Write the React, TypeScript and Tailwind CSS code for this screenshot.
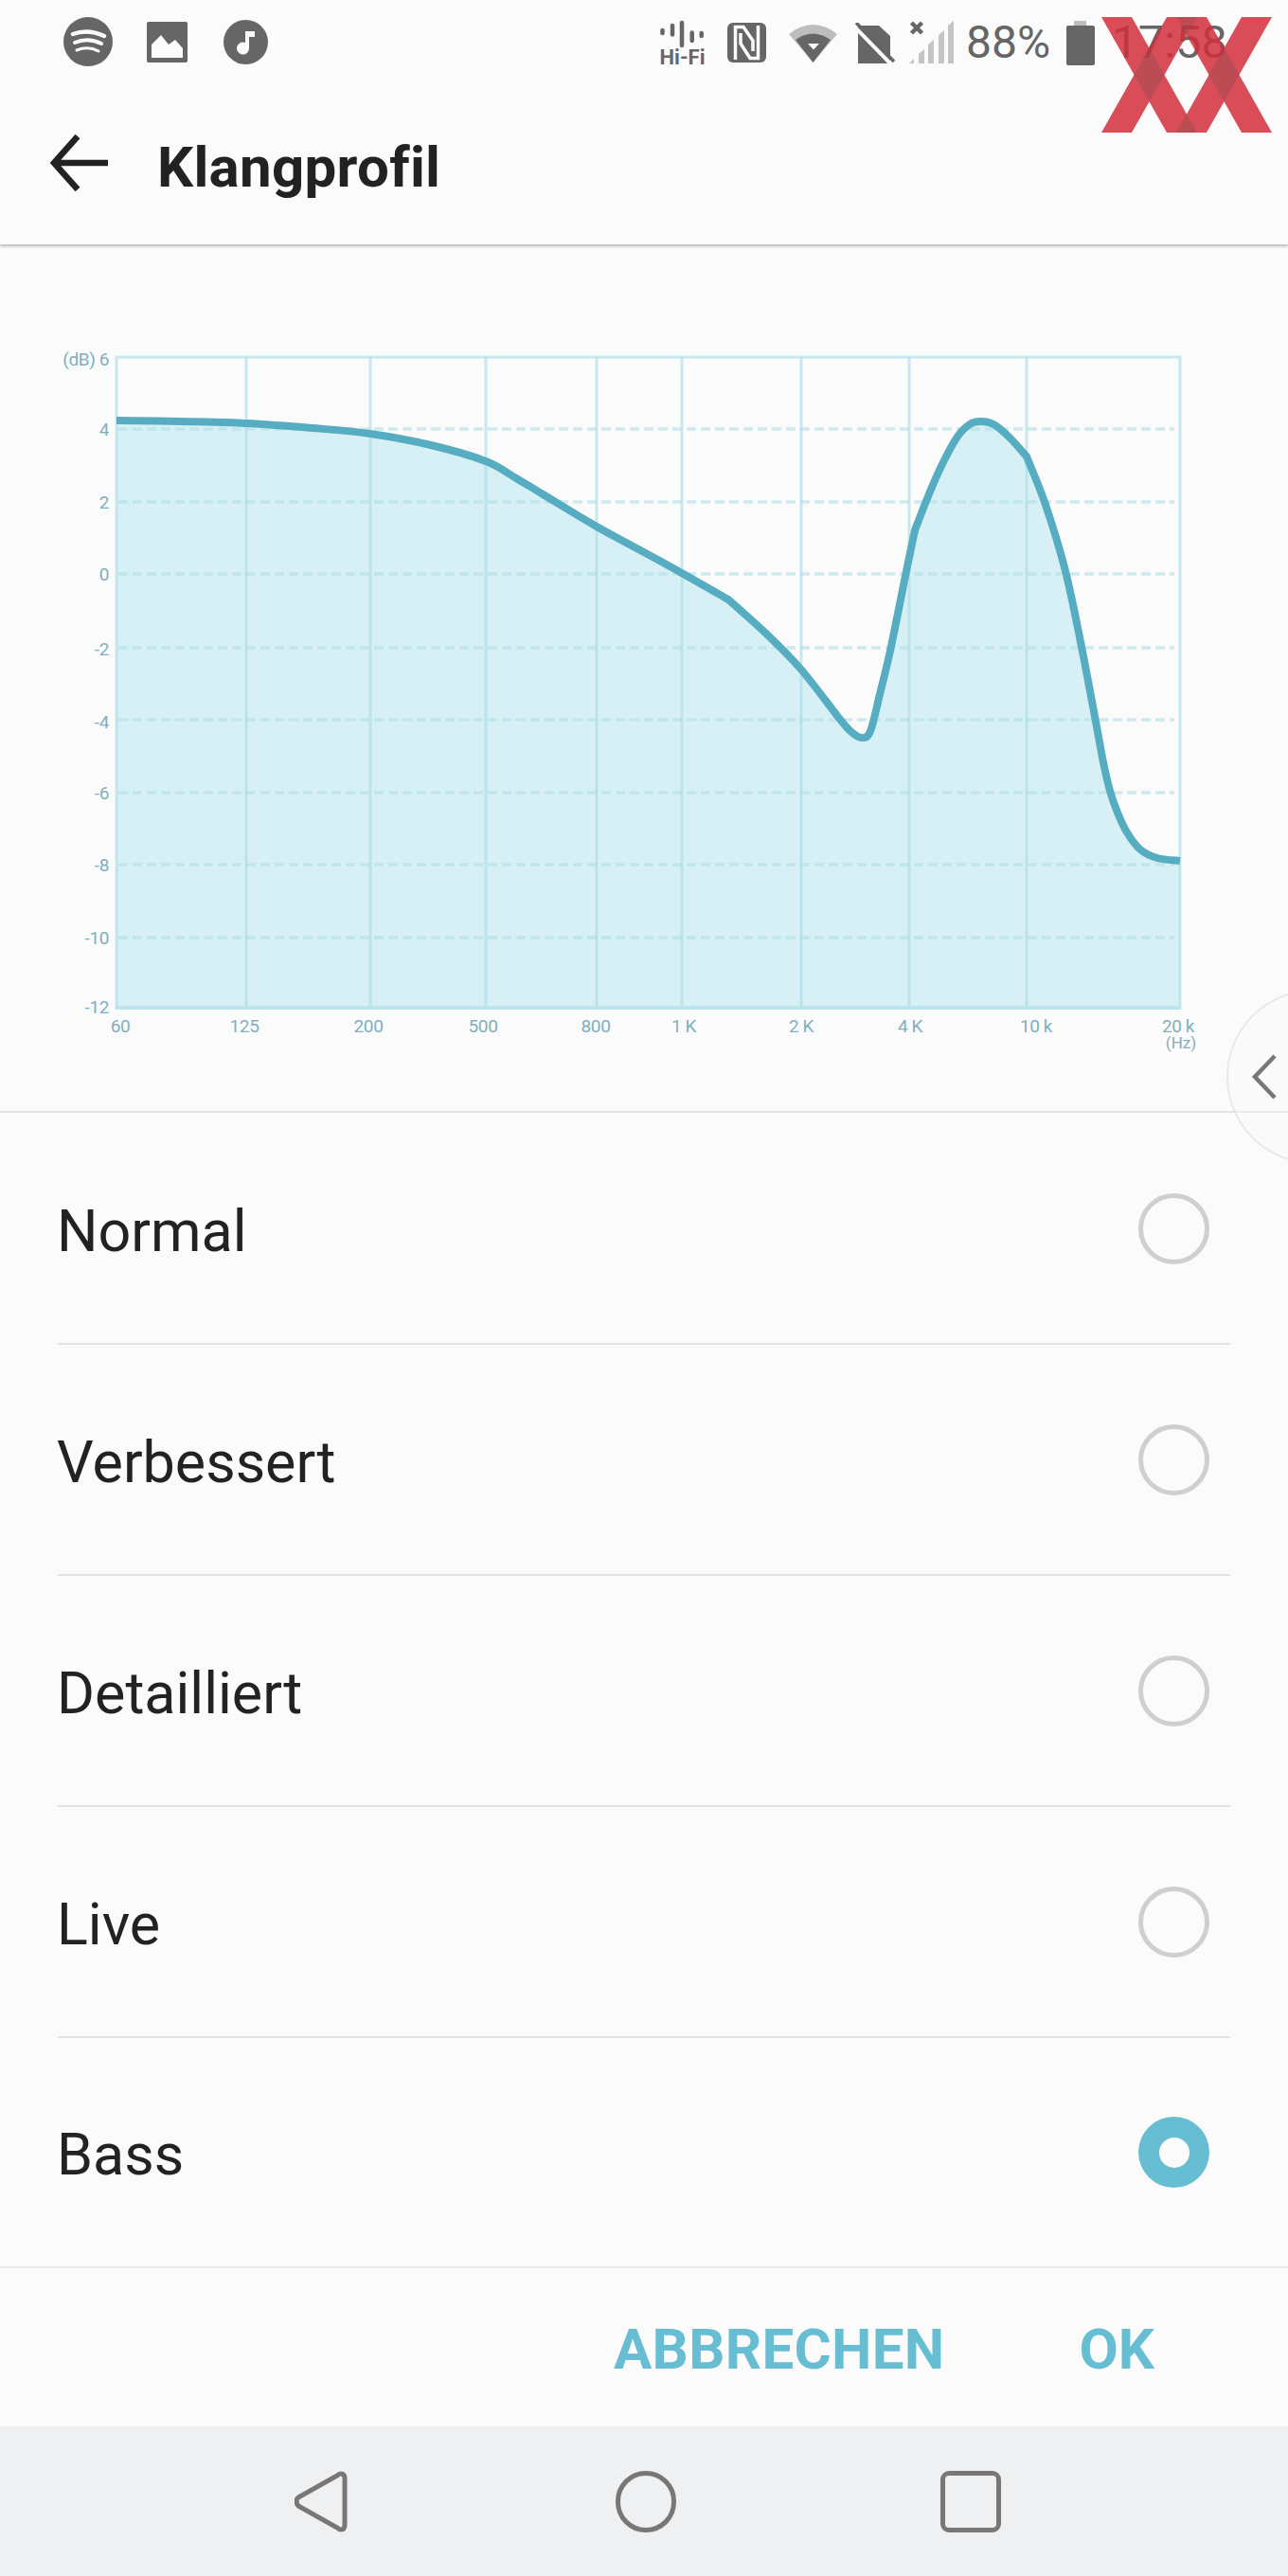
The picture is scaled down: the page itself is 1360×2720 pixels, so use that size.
// split at the kinks so each piece stays smooth on its own
const curveParts: [number, number][][] = [
  [[123, 444], [190, 445], [260, 447], [330, 452], [391, 458], [455, 470], [513, 487], [545, 505], [575, 523], [630, 556], [700, 594], [769, 633]],
  [[769, 633], [810, 670], [846, 707], [885, 757], [898, 772], [910, 779], [919, 772], [929, 733], [940, 687], [957, 603], [966, 560]],
  [[966, 560], [980, 524], [995, 490], [1011, 461], [1024, 448], [1035, 445], [1049, 448], [1066, 462], [1084, 482]],
  [[1084, 482], [1104, 533], [1125, 603], [1142, 683], [1157, 762], [1165, 805], [1172, 835], [1180, 858], [1190, 879], [1204, 897], [1222, 906], [1246, 909]],
];

// catmull-rom through the points
function smooth(pts: [number, number][]) {
  let d = '';
  for (let i = 0; i < pts.length - 1; i++) {
    const p0 = pts[Math.max(i - 1, 0)];
    const p1 = pts[i];
    const p2 = pts[i + 1];
    const p3 = pts[Math.min(i + 2, pts.length - 1)];
    const c1x = p1[0] + (p2[0] - p0[0]) / 6;
    const c1y = p1[1] + (p2[1] - p0[1]) / 6;
    const c2x = p2[0] - (p3[0] - p1[0]) / 6;
    const c2y = p2[1] - (p3[1] - p1[1]) / 6;
    d += ` C${c1x.toFixed(1)} ${c1y.toFixed(1)} ${c2x.toFixed(1)} ${c2y.toFixed(1)} ${p2[0]} ${p2[1]}`;
  }
  return d;
}

const curvePath = `M123 444${curveParts.map(smooth).join('')}`;
const verticals = [260, 391, 513, 630, 720, 846, 960, 1084];
const dashes = [453, 530, 606, 684, 760, 837, 913, 990];
const yLabels: [string, number][] = [
  ['(dB) 6', 379], ['4', 453], ['2', 530], ['0', 606], ['-2', 685], ['-4', 762], ['-6', 837], ['-8', 913], ['-10', 990], ['-12', 1063],
];
const xLabels: [string, number][] = [
  ['60', 127], ['125', 258], ['200', 389], ['500', 510], ['800', 629], ['1 K', 722], ['2 K', 846], ['4 K', 961], ['10 k', 1094], ['20 k', 1244],
];
const options = ['Normal', 'Verbessert', 'Detailliert', 'Live', 'Bass'];

function Chart() {
  return (
    <svg width="1360" height="916" viewBox="0 258 1360 916" className="block font-['Roboto',sans-serif]">
      <path d={`${curvePath} L1246 1064 L123 1064 Z`} fill="#d7f0f5" />
      {dashes.map(y => (
        <line key={y} x1="125" x2="1240" y1={y} y2={y} stroke="#b4e0e8" strokeOpacity="0.65" strokeWidth="3.5" strokeDasharray="10 5" />
      ))}
      {verticals.map(x => (
        <line key={x} x1={x} x2={x} y1="377" y2="1064" stroke="#a8dbe7" strokeOpacity="0.6" strokeWidth="3" />
      ))}
      <rect x="123" y="377" width="1123" height="687" fill="none" stroke="#a8dbe7" strokeOpacity="0.6" strokeWidth="3" />
      <line x1="122" x2="1247" y1="1064" y2="1064" stroke="#bde3ec" strokeWidth="4" />
      <path d={curvePath} fill="none" stroke="#56adc2" strokeWidth="8" strokeLinejoin="round" />
      {yLabels.map(([label, y]) => (
        <text key={label} x="115" y={y + 7} textAnchor="end" className="fill-[#7fb0bd] text-[19px] tracking-[-0.4px]">{label}</text>
      ))}
      {xLabels.map(([label, x]) => (
        <text key={label} x={x} y="1090" textAnchor="middle" className="fill-[#7fb0bd] text-[19px] tracking-[-0.4px]">{label}</text>
      ))}
      <text x="1247" y="1107" textAnchor="middle" className="fill-[#7fb0bd] text-[17px]">(Hz)</text>
    </svg>
  );
}

function StatusLeft() {
  return (
    <div className="flex items-center">
      <svg width="52" height="52" viewBox="0 0 52 52" className="ml-[67px]">
        <circle cx="26" cy="26" r="26" fill="#666" />
        <g fill="none" stroke="#fbfbfb" strokeLinecap="round">
          <path d="M10 18 Q26 12 43 20" strokeWidth="4.5" />
          <path d="M12 27 Q26 21 40 28" strokeWidth="4" />
          <path d="M14 35 Q26 30 37 36" strokeWidth="3" />
        </g>
      </svg>
      <svg width="43" height="43" viewBox="0 0 43 43" className="ml-[36px]">
        <rect width="43" height="43" rx="2" fill="#666" />
        <path d="M5 38 V24 L15 14 L23 24 L30 19 L38 28 V38 Z" fill="#fbfbfb" />
      </svg>
      <svg width="47" height="47" viewBox="0 0 47 47" className="ml-[38px]">
        <circle cx="23.5" cy="23.5" r="23.5" fill="#666" />
        <path d="M23 12 H33 V18 H27 V30 A6.5 6.5 0 1 1 23 24 Z" fill="#fbfbfb" />
      </svg>
    </div>
  );
}

function StatusRight() {
  return (
    <div className="flex items-center absolute left-[696px] top-[21px] h-[48px]">
      <div className="w-[49px] h-[48px] flex flex-col items-center">
        <svg width="49" height="31" viewBox="0 0 49 31" className="shrink-0">
          <g stroke="#666" strokeLinecap="round" strokeWidth="4.5">
            <path d="M3.5 11 V14" />
            <path d="M14 6 V15.5" />
            <path d="M24 3 V27" />
            <path d="M34.7 13.5 V22" />
            <path d="M44.7 14 V17" />
          </g>
        </svg>
        <span className="font-['Roboto',sans-serif] font-bold text-[22px] leading-[18px] text-[#666]">Hi-Fi</span>
      </div>
      <svg width="41" height="42" viewBox="0 0 41 42" className="ml-[23px]">
        <rect width="41" height="42" rx="6" fill="#666" />
        <g fill="none" stroke="#fbfbfb" strokeWidth="3.5">
          <path d="M8.5 39 V4.5 H17 L27 19 V30" />
          <path d="M32.5 3 V37.5 H24 L14 22 V11" />
        </g>
      </svg>
      <svg width="51" height="41" viewBox="0 0 51 41" className="ml-[24px]">
        <path d="M0 11 Q25.5 -9 51 11 L25.5 41 Z" fill="#bdbdbd" />
        <path d="M7 17 Q25.5 4 44 17 L25.5 41 Z" fill="#666" />
        <path d="M20 21 H32 L26 27.5 Z" fill="#fbfbfb" />
      </svg>
      <svg width="43" height="43" viewBox="0 0 43 43" className="ml-[18px]">
        <path d="M4 3 H26 L38 14 V43 H4 Z" fill="#666" />
        <path d="M0 4 L38 43" stroke="#fbfbfb" strokeWidth="4" />
        <path d="M2 0 L42 41" stroke="#666" strokeWidth="3.5" />
      </svg>
      <svg width="47" height="48" viewBox="0 0 47 48" className="ml-[15px]">
        <path d="M2.5 3 L13.5 14 M13.5 3 L2.5 14" stroke="#666" strokeWidth="4.5" />
        <path d="M0 46 L5 41 V46 Z M10 46 V36 L16 31 V46 Z M20 46 V26 L26 21 V46 Z M31 46 V16 L37 11 V46 Z M41 46 V6 L47 1 V46 Z" fill="#c4c4c4" />
      </svg>
      <span className="ml-[13px] font-['Roboto',sans-serif] text-[48px] leading-[48px] text-[#666]">88%</span>
      <svg width="30" height="47" viewBox="0 0 30 47" className="ml-[17px]">
        <path d="M8 0 H21 V5 H8 Z" fill="#bdbdbd" />
        <path d="M2 5 H28 Q30 5 30 7 V45 Q30 47 28 47 H2 Q0 47 0 45 V7 Q0 5 2 5 Z" fill="#666" />
      </svg>
      <span className="ml-[18px] font-['Roboto',sans-serif] text-[49px] leading-[48px] text-[#666]">17:58</span>
    </div>
  );
}

function Watermark() {
  return (
    <svg width="180" height="122" viewBox="0 0 180 122" className="absolute left-[1163px] top-[18px]">
      <g fill="#d22f3b" opacity="0.85">
        <path d="M0 122 L69 0 H101 L32 122 Z" />
        <path d="M0 0 H32 L101 122 H69 Z" />
        <path d="M79 122 L148 0 H180 L111 122 Z" />
        <path d="M79 0 H111 L180 122 H148 Z" />
      </g>
      <g fill="#7a4a50" opacity="0.3">
        <path d="M50.5 32.7 L66.5 61 L50.5 89.3 L34.5 61 Z" />
        <path d="M129.5 32.7 L145.5 61 L129.5 89.3 L113.5 61 Z" />
        <path d="M79 0 H101 L90 19.4 Z" />
        <path d="M79 122 H101 L90 102.6 Z" />
      </g>
    </svg>
  );
}

function Radio({ on }: { on: boolean }) {
  if (on) {
    return (
      <div className="w-[75px] h-[75px] rounded-full bg-[#67bed3] flex items-center justify-center mr-[22px]">
        <div className="w-[32px] h-[32px] rounded-full bg-[#fbfbfb]" />
      </div>
    );
  }
  return <div className="w-[75px] h-[75px] rounded-full border-[5px] border-[#cfcfcf] mr-[22px]" />;
}

export default function App() {
  return (
    <div className="relative w-[1360px] h-[2720px] overflow-hidden bg-[#fbfbfb] flex flex-col font-['Roboto',sans-serif]">
      <div className="relative z-10 h-[258px] shrink-0 bg-[#fbfbfb] shadow-[0_2px_3px_rgba(0,0,0,0.28)]">
        <div className="h-[88px] flex items-center">
          <StatusLeft />
        </div>
        <StatusRight />
        <div className="h-[170px] flex items-start">
          <svg width="64" height="62" viewBox="0 0 64 62" className="ml-[52px] mt-[53px]">
            <path d="M62 31 H5 M30 3 L5 31 L30 59" fill="none" stroke="#222" strokeWidth="6.5" />
          </svg>
          <h1 className="ml-[50px] mt-[54px] text-[60px] leading-[70px] font-bold text-[#222] tracking-[0.3px]">Klangprofil</h1>
        </div>
        <Watermark />
      </div>

      <div className="h-[915px] shrink-0">
        <Chart />
      </div>

      <div className="h-[1220px] pt-[1px] border-t-2 border-[#e3e3e3] shrink-0 flex flex-col">
        {options.map((name, i) => (
          <div key={name} className={`px-[61px] ${i < 4 ? 'h-[244px] shrink-0' : 'flex-1'}`}>
            <div className={`h-full flex items-center justify-between ${i < 4 ? 'border-b-2 border-[#e3e3e3]' : ''}`}>
              <span className="-ml-[1px] mt-[5px] text-[61px] leading-[70px] text-[#222]">{name}</span>
              <Radio on={name === 'Bass'} />
            </div>
          </div>
        ))}
      </div>

      <div className="h-[169px] shrink-0 border-t-2 border-[#e8e8e8] flex items-center justify-end pr-[141px] gap-[142px]">
        <span className="mt-[4px] text-[60px] leading-[70px] font-bold text-[#67bed3] tracking-[0.3px]">ABBRECHEN</span>
        <span className="mt-[4px] text-[60px] leading-[70px] font-bold text-[#67bed3]">OK</span>
      </div>

      <div className="flex-1 bg-[#eff0f2] flex items-center">
        <svg width="56" height="65" viewBox="0 0 56 65" className="ml-[311px]">
          <path d="M49 3 Q53 3 53 8 V57 Q53 62 49 62 Q47 62 45 60 L4 37 Q0 32 4 28 L45 5 Q47 3 49 3 Z" fill="none" stroke="#777" strokeWidth="5" />
        </svg>
        <div className="ml-[283px] w-[64px] h-[65px] rounded-full border-[5px] border-[#777]" />
        <div className="ml-[279px] w-[64px] h-[65px] rounded-[9px] border-[5px] border-[#777]" />
      </div>

      <div className="absolute left-[1295px] top-[1045px] w-[184px] h-[184px] rounded-full border-2 border-[#e8e8e8] bg-[#fbfbfb]/40">
        <svg width="28" height="48" viewBox="0 0 28 48" className="absolute left-[24px] top-[66px]">
          <path d="M25 2 L4 24 L25 46" fill="none" stroke="#777" strokeWidth="4.5" />
        </svg>
      </div>
    </div>
  );
}
